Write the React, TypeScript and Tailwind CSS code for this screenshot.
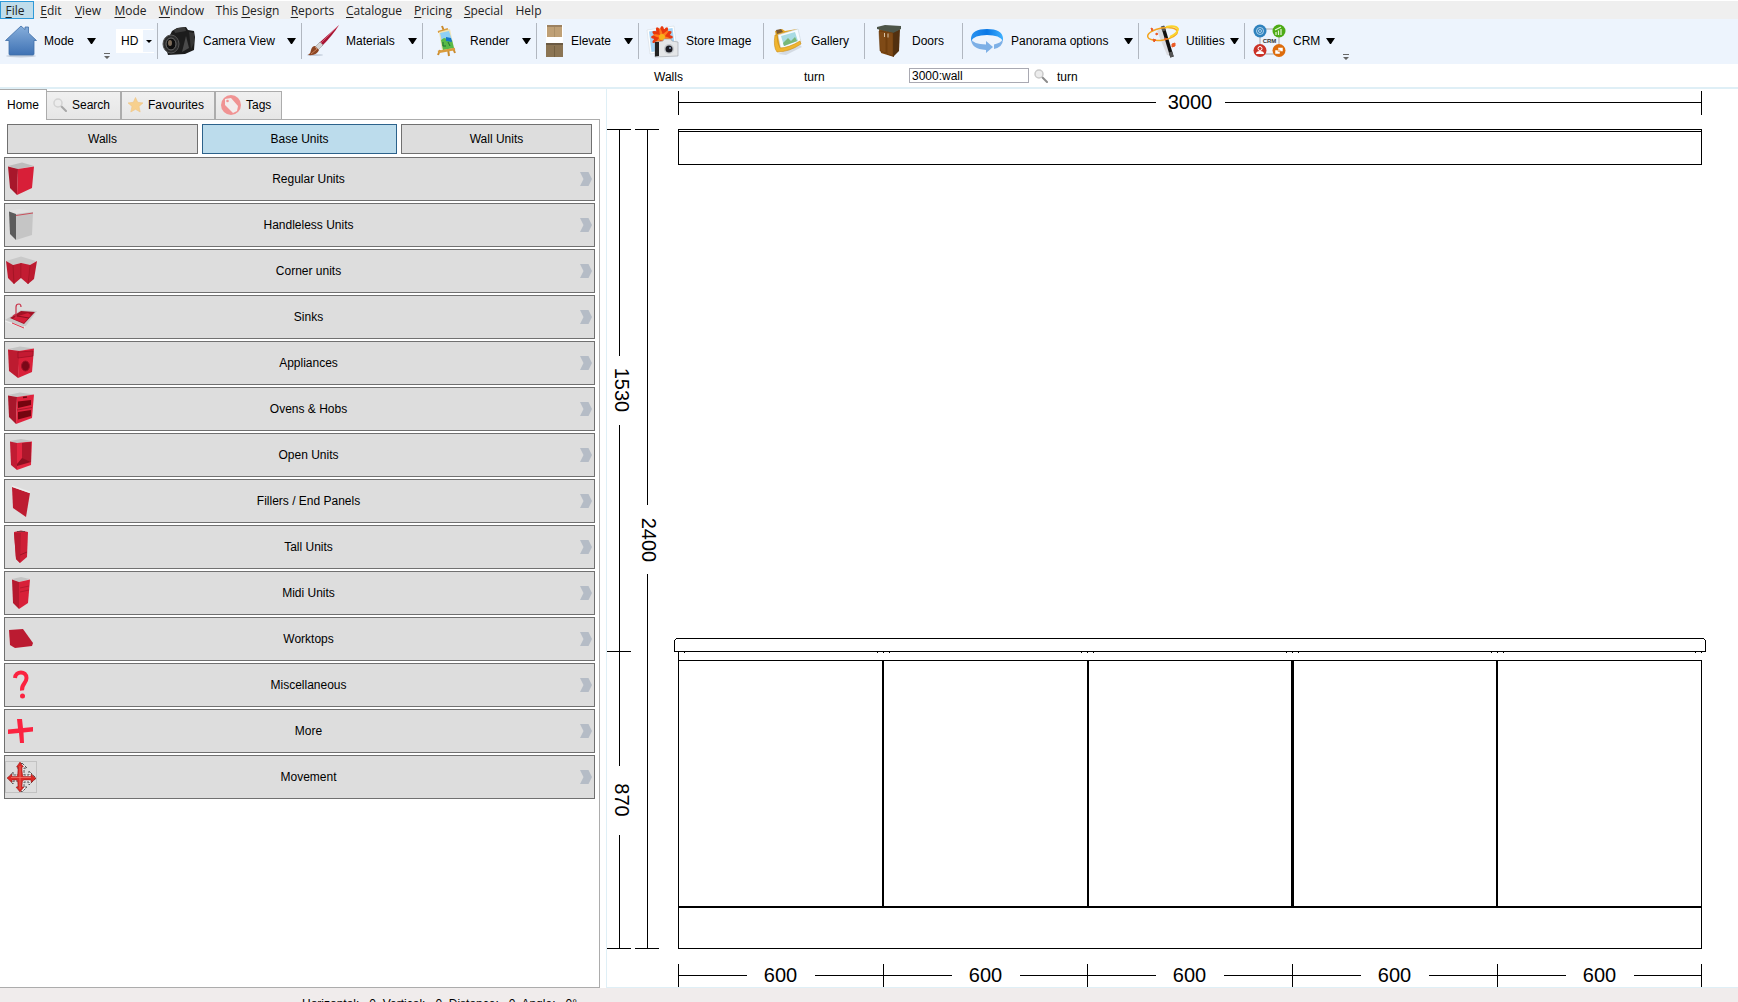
import React from 'react';

const menuItems = [
  { name: 'File', key: 0, width: 'w-[34px]' },
  { name: 'Edit', key: 0, width: 'w-[34px]' },
  { name: 'View', key: 0, width: 'w-[40px]' },
  { name: 'Mode', key: 0, width: 'w-[45px]' },
  { name: 'Window', key: 0, width: 'w-[57px]' },
  { name: 'This Design', key: 5, width: 'w-[75px]' },
  { name: 'Reports', key: 0, width: 'w-[55px]' },
  { name: 'Catalogue', key: 0, width: 'w-[68px]' },
  { name: 'Pricing', key: 0, width: 'w-[50px]' },
  { name: 'Special', key: 0, width: 'w-[51px]' },
  { name: 'Help', key: -1, width: 'w-[39px]' },
];

function MenuBar() {
  return (
    <nav className="mt-px flex h-[18px] shrink-0 bg-[#efefef] font-['Open_Sans',sans-serif] text-[12px] leading-[18px] text-[#222]">
      {menuItems.map((item, index) => (
        <button
          key={item.name}
          className={`${item.width} whitespace-nowrap border ${
            index === 0 ? 'border-[#2f9ad8] bg-[#c0ddeb] pr-1' : 'border-transparent'
          }`}
        >
          {item.key < 0 ? (
            item.name
          ) : (
            <>
              {item.name.slice(0, item.key)}
              <span className="underline underline-offset-2">{item.name[item.key]}</span>
              {item.name.slice(item.key + 1)}
            </>
          )}
        </button>
      ))}
    </nav>
  );
}

function DownArrow() {
  return (
    <svg width="9" height="6" viewBox="0 0 9 6">
      <path d="M0 0h9L5 6H4z" fill="#000" />
    </svg>
  );
}

function OverflowMark() {
  return (
    <svg width="6" height="7" viewBox="0 0 6 7" className="self-end">
      <path d="M0 0h6v1H0zM0 3h6L3 6z" fill="#666" />
    </svg>
  );
}

const houseIcon = (
  <>
    <defs>
      <linearGradient id="house" x1="0" y1="0" x2="0" y2="1">
        <stop offset="0" stopColor="#86aedb" />
        <stop offset="1" stopColor="#3f72b4" />
      </linearGradient>
    </defs>
    <ellipse cx="21" cy="33" rx="15" ry="1.500" fill="#c5cfdd" />
    <path
      d="M21 3L5.500 17.500H9V31q0 1 1 1H33q1 0 1-1V17.500H36.500L28.500 10V4H25V6.500z"
      fill="url(#house)"
      stroke="#3f6ea8"
      strokeWidth=".8"
    />
  </>
);

const cameraIcon = (
  <>
    <path d="M14 8l5-3 9-1 2 3 6 1 1 6-1 13-9 4-17 1-3-10z" fill="#1c1c1c" />
    <path d="M16 7l4-2 7-1 1 4-11 2z" fill="#3a3a3a" />
    <path d="M31 9l5 1v10l-3 6z" fill="#343434" />
    <path d="M28 13l3 12-7 4z" fill="#4a4a4a" />
    <ellipse cx="13" cy="21" rx="8" ry="9" fill="#2c2c2c" stroke="#555" />
    <ellipse cx="13" cy="21" rx="5" ry="6" fill="#0e0e0e" stroke="#6a6a6a" />
    <ellipse cx="12" cy="20" rx="2" ry="3" fill="#7b6a58" />
  </>
);

const brushIcon = (
  <>
    <ellipse cx="13" cy="32" rx="8" ry="1" fill="#c5cfdd" />
    <path d="M37 2L17 20l3 3q11-11 17-21z" fill="#a81533" />
    <path d="M36 3L19 20" stroke="#e0708a" strokeWidth=".7" />
    <path d="M18 19l3 3-5 5-3-3z" fill="#d5d5d5" stroke="#888" strokeWidth=".5" />
    <path d="M13 23l4 4q-2 6-11 5 3-2 3-5 1-4 4-4z" fill="#8c4523" />
    <path d="M13 24l2 2-6 5" fill="none" stroke="#c7825c" />
  </>
);

const easelIcon = (
  <>
    <path d="M19 3l2 5M17 27l-2 5M30 25l2 5M25 26l1 7" stroke="#c98a2e" strokeWidth="2" />
    <path d="M15 9l10-3" stroke="#d99b3c" strokeWidth="2" />
    <path d="M16 9l11-3 4 19-12 3z" fill="#f2e3b3" />
    <path d="M17 10l9-2 3 9-10 2z" fill="#8fd0f5" />
    <path d="M18 17l3-2 8 2 2 8-11 2z" fill="#58b947" />
    <path d="M23 14l5 1 1 4-6-1z" fill="#1677c8" />
    <path d="M20 19v4h3M25 19l2 4" stroke="#1f6f36" fill="none" />
    <path d="M15 29l17-3" stroke="#d99b3c" strokeWidth="2.500" />
  </>
);

const elevateIcon = (
  <>
    <path d="M9 2h17v32H9z" fill="#fff" />
    <path d="M10 2h15v12H10z" fill="#bfa076" />
    <path d="M10 2h15v2H10z" fill="#9c8160" />
    <path d="M17.500 4v10" stroke="#a08560" strokeWidth=".6" />
    <path d="M9 20h17v14H9z" fill="#8b7453" />
    <path d="M9 20h17v2H9z" fill="#6b5a43" />
    <path d="M17.500 23v11" stroke="#655236" strokeWidth=".6" />
  </>
);

const storeImageIcon = (
  <>
    <path d="M8 7l27-4 3 24-27 4z" fill="#fff" stroke="#d5dbe2" strokeWidth=".6" />
    <path d="M10 8.500L33.500 5l2.500 20-23.500 4z" fill="#a5d4f5" />
    {[0, 30, 60, 90, 120, 150].map((angle) => (
      <ellipse key={angle} cx="23" cy="14" rx="11" ry="3" fill="#e8380d" transform={`rotate(${angle} 23 14)`} />
    ))}
    {[15, 75, 135].map((angle) => (
      <ellipse key={angle} cx="23" cy="14" rx="9" ry="1.500" fill="#ff7a1c" transform={`rotate(${angle} 23 14)`} />
    ))}
    <circle cx="23" cy="14" r="3" fill="#f6b21b" />
    <path d="M16 19l8-1 1-2h7l1 2 6 1v14l-23 1z" fill="#e4e6e8" stroke="#9aa0a6" strokeWidth=".6" />
    <path d="M16 19h4v14l-4 .5z" fill="#222" />
    <circle cx="30" cy="26" r="5" fill="#c4c8cc" />
    <circle cx="30" cy="26" r="3.500" fill="#1b1b22" />
    <circle cx="31" cy="25" r="1" fill="#8ea0c0" />
  </>
);

const galleryIcon = (
  <>
    <path d="M14 31l22-9 2 2-16 8z" fill="#d3dae3" />
    <path d="M11 8l7-2 3 2 12-2 4 13-22 9z" fill="#e2a526" />
    <path d="M12 7l5-1 2 3-6 2z" fill="#7b5a33" />
    <path d="M14 12l20-6 3 13-20 8z" fill="#f7fbff" stroke="#c9d7e2" strokeWidth=".6" />
    <path d="M17 13l14-4 3 9-14 5z" fill="#a9dbe3" />
    <path d="M19 20l5-5 3 3 4-4 2 4-13 5z" fill="#7ab878" />
    <path d="M11 12q-2 12 2 17 12 0 24-8l-1-3q-12 7-20 7-3-5-3-13z" fill="#f0b52f" stroke="#c88c18" strokeWidth=".6" />
  </>
);

const doorsIcon = (
  <>
    <path d="M14 6l15 3v25l-13-4z" fill="#7d4712" />
    <path d="M28 9l7-3-1 22-6 6z" fill="#52300f" />
    <path d="M12 4l8-2 16 1v3l-8 4-16-4z" fill="#4d5549" />
    <path d="M14 8l7 1v21l-6-2zM22 9l6 1v23l-6-2z" fill="#7f4a16" stroke="#63370b" strokeWidth=".5" />
    <path d="M19.500 10v4M23 10.500v4" stroke="#e1d4bb" strokeWidth=".9" />
  </>
);

const panoramaIcon = (
  <>
    <defs>
      <linearGradient id="pano" x1="0" y1="0" x2="1" y2="0">
        <stop offset="0" stopColor="#2b93f0" />
        <stop offset=".5" stopColor="#0a78e6" />
        <stop offset="1" stopColor="#3fb1ff" />
      </linearGradient>
    </defs>
    <path d="M8 16q2 5 15 5.500V18l7 6-7 6v-3Q8 26 8 16z" fill="#7eb0e6" />
    <path d="M40 16q0 8-9 10v-4.500q7-1.500 9-5.500z" fill="#7eb0e6" />
    <path d="M8 15Q9 6 24 6t16 9v3q-3-6-16-6T8 18z" fill="url(#pano)" />
  </>
);

const utilitiesIcon = (
  <>
    <path d="M18 8l6-5 9 30-5-1z" fill="#d5d5d8" opacity=".8" />
    <path d="M24 4l9 30" stroke="#111" strokeWidth="3.500" />
    <path d="M23.500 3l1.500 5M31.500 29l1.500 5" stroke="#555" strokeWidth="3.500" />
    <ellipse cx="23.500" cy="11" rx="15" ry="6" fill="none" stroke="#f3a41f" strokeWidth="1.500" transform="rotate(-10 23.500 11)" />
    <path d="M27 4q10-2 12 2 0 4-8 8" fill="none" stroke="#fbd32c" strokeWidth="2" />
    <path d="M17 10l2 1-2 1zM12 5l2 1-1 2zM33 21l3-1v3l-3 1zM14 16l3 1-2 2zM26 15l2 1-2 1z" fill="#ec5b25" stroke="#ec5b25" />
  </>
);

const crmIcon = (
  <>
    <rect x="15" y="6" width="19" height="25" rx="4" fill="none" stroke="#a9a9a9" />
    <circle cx="15" cy="8" r="6.500" fill="#2f82bd" />
    <circle cx="15" cy="8" r="3.500" fill="none" stroke="#cfe6f5" strokeWidth=".8" />
    <circle cx="15" cy="8" r="1.500" fill="none" stroke="#cfe6f5" strokeWidth=".8" />
    <circle cx="34" cy="8" r="6.500" fill="#4dab16" />
    <path d="M31 12V9M33.500 12V7.500M36 12V6M30 7l6-3" stroke="#e4f6d8" strokeWidth="1.200" />
    <circle cx="15" cy="27.500" r="6.500" fill="#cb3227" />
    <circle cx="15" cy="25.500" r="2" fill="none" stroke="#fff" />
    <path d="M11 31q0-3 4-3t4 3z" fill="#fff" />
    <circle cx="34" cy="27.500" r="6.500" fill="#dd6c0c" />
    <path d="M33 24.500h5v4h-5zM30 27h5v4h-5z" fill="#fff" stroke="#dd6c0c" strokeWidth=".5" />
    <rect x="16" y="15" width="17" height="6" fill="#edf4fd" />
    <text x="24.500" y="20" textAnchor="middle" fontSize="6" fontWeight="bold" fill="#333">
      CRM
    </text>
  </>
);

const tools = [
  { name: 'Camera View', icon: cameraIcon, slot: 45, width: 'w-[144px]', menu: true },
  { name: 'Materials', icon: brushIcon, slot: 44, width: 'w-[121px]', menu: true },
  { name: 'Render', icon: easelIcon, slot: 47, width: 'w-[114px]', menu: true },
  { name: 'Elevate', icon: elevateIcon, slot: 34, width: 'w-[102px]', menu: true },
  { name: 'Store Image', icon: storeImageIcon, slot: 47, width: 'w-[125px]', menu: false },
  { name: 'Gallery', icon: galleryIcon, slot: 47, width: 'w-[101px]', menu: false },
  { name: 'Doors', icon: doorsIcon, slot: 47, width: 'w-[98px]', menu: false },
  { name: 'Panorama options', icon: panoramaIcon, slot: 48, width: 'w-[176px]', menu: true },
  { name: 'Utilities', icon: utilitiesIcon, slot: 47, width: 'w-[106px]', menu: true },
];

function ToolIcon({ slot, children }: { slot: number; children: React.ReactNode }) {
  return (
    <svg width={slot} height="36" viewBox={`0 0 ${slot} 36`} className="shrink-0">
      {children}
    </svg>
  );
}

function Toolbar() {
  return (
    <div className="flex h-[45px] shrink-0 bg-[#edf4fd] pt-1 pb-[5px]">
      <div className="flex w-[158px] shrink-0 items-center border-r border-[#b1b7c0]">
        <button className="flex w-[96px] items-center">
          <ToolIcon slot={44}>{houseIcon}</ToolIcon>
          <span className="flex-1 text-left">Mode</span>
          <DownArrow />
        </button>
        <div className="ml-2 flex h-[38px] items-end">
          <OverflowMark />
        </div>
        <div className="relative ml-1.5 flex h-6 w-[38px] bg-white">
          <select aria-label="Quality" className="h-6 w-full appearance-none bg-white pl-[5px] outline-none">
            <option>HD</option>
          </select>
          <span className="pointer-events-none absolute top-px right-0 flex h-[22px] w-[11px] items-center justify-center bg-[#edf4fd]">
            <svg width="6" height="3" viewBox="0 0 6 3">
              <path d="M0 0h6L3 3z" fill="#000" />
            </svg>
          </span>
        </div>
      </div>
      {tools.map((tool) => (
        <button
          key={tool.name}
          className={`${tool.width} flex shrink-0 items-center whitespace-nowrap border-r border-[#b1b7c0] pr-[5px]`}
        >
          <ToolIcon slot={tool.slot}>{tool.icon}</ToolIcon>
          <span className="flex-1 text-left">{tool.name}</span>
          {tool.menu && <DownArrow />}
        </button>
      ))}
      <button className="flex w-[90px] shrink-0 items-center">
        <ToolIcon slot={48}>{crmIcon}</ToolIcon>
        <span className="flex-1 text-left">CRM</span>
        <DownArrow />
      </button>
      <div className="ml-2 flex h-[38px] items-end">
        <OverflowMark />
      </div>
    </div>
  );
}

function Magnifier() {
  return (
    <svg width="14" height="14" viewBox="0 0 14 14" className="shrink-0">
      <path d="M7.500 7.500L13 13" stroke="#8b8b8b" strokeWidth="2" strokeLinecap="round" />
      <circle cx="5" cy="5" r="4" fill="#ececec" stroke="#c9c9c9" strokeWidth="1.500" />
    </svg>
  );
}

function SearchRow() {
  return (
    <div className="flex h-[25px] shrink-0 items-center border-b-2 border-[#dfeff6] bg-white pl-[654px]">
      <label htmlFor="wall-name" className="w-[150px] pt-0.5">
        Walls
      </label>
      <span className="w-[105px] pt-0.5">turn</span>
      <input
        id="wall-name"
        defaultValue="3000:wall"
        className="h-[15px] w-[120px] border border-[#a9a9b2] bg-white px-0.5 leading-3 outline-none"
      />
      <button aria-label="Search" className="ml-[5px]">
        <Magnifier />
      </button>
      <span className="ml-[9px] pt-0.5">turn</span>
    </div>
  );
}

const units = [
  {
    name: 'Regular Units',
    icon: (
      <>
        <path d="M3 3l14-3.500L29 3 13 6z" fill="#bdbdbd" />
        <path d="M3 3.500L13 6l-1 26-7-7z" fill="#a8172b" />
        <path d="M13 6l16-2.500L27 25l-15 7z" fill="#d81f38" />
      </>
    ),
  },
  {
    name: 'Handleless Units',
    icon: (
      <>
        <path d="M3 2l11-2 14 2-17 3z" fill="#e2e2e2" />
        <path d="M4 2.500L11 5v26l-6-6z" fill="#5c5c5c" />
        <path d="M11 5l17-2-1 23-16 5z" fill="#c5c5c5" />
        <path d="M11 6.500l17-2.500" stroke="#c9505c" />
      </>
    ),
  },
  {
    name: 'Corner units',
    icon: (
      <>
        <path d="M1 6l15-4.500L31 6l-6 4-9-2-9 2z" fill="#c9c9c9" />
        <path d="M1 6l7 4 8-2 9 2 7-4-3 18-6 5-7-6-7 6-6-6z" fill="#bd1b30" />
        <path d="M8 10l1 19M16 8v15M25 10l-2 19" stroke="#93101f" strokeWidth=".6" />
        <path d="M16 8l9 2-2 19-7-6z" fill="#d02038" opacity=".3" />
      </>
    ),
  },
  {
    name: 'Sinks',
    icon: (
      <>
        <path d="M0 19L16 9l16 1-12 16z" fill="#c8c8c8" />
        <path d="M5 17l11-7 14 1-11 12z" fill="#a31225" />
        <path d="M10 16l13-4 3 2-7 8-11-4z" fill="#d41f38" />
        <path d="M12 15l12 2" stroke="#8c0f1f" />
        <path d="M0 20l19 7 1-2" fill="none" stroke="#eee" />
        <path d="M7 22l12 5" stroke="#e2334a" />
        <path d="M11 17V6q0-3 3-3 2 0 2 3M8 15l3-2" fill="none" stroke="#c8334a" strokeWidth="1.200" />
      </>
    ),
  },
  {
    name: 'Appliances',
    icon: (
      <>
        <path d="M3 2l12-2.500L29 1.500 15 4z" fill="#c4c4c4" />
        <path d="M3 2.500L15 4l-2 27-9-7z" fill="#bd1b30" />
        <path d="M14 4l15-2.500L27 25l-14 6z" fill="#d92039" />
        <path d="M13 5l15-1v5l-15 2z" fill="#c41a32" stroke="#8e0f20" strokeWidth=".6" />
        <ellipse cx="20.500" cy="19" rx="4" ry="5" fill="#7a0717" stroke="#a01226" />
      </>
    ),
  },
  {
    name: 'Ovens & Hobs',
    icon: (
      <>
        <path d="M3 2l12-2.500L29 1.500 12 4z" fill="#c4c4c4" />
        <path d="M3 2.500L12 4l-1 27-7-7z" fill="#a8172b" />
        <path d="M12 4l17-2.500L27 25l-16 6z" fill="#e0233d" />
        <path d="M13 8.500L26 7v5l-13 3zM13 19l13-2v6l-13 3.500z" fill="#74050f" />
        <path d="M18 4.500l4-.5" stroke="#6d0a14" strokeWidth="1.500" />
        <path d="M12 17l15-2.500" stroke="#a8172b" />
      </>
    ),
  },
  {
    name: 'Open Units',
    icon: (
      <>
        <path d="M5 2l11-2 11 2-15 3z" fill="#c4c4c4" />
        <path d="M5 2.500L12 4v27l-6-5z" fill="#c11c33" />
        <path d="M12 4l15-1.500L26 26l-14 5z" fill="#e32640" />
        <path d="M17 4l9-1v20l-9-3z" fill="#ad172b" />
        <path d="M12 25l5-6 9 4-14 4z" fill="#8c1020" />
      </>
    ),
  },
  {
    name: 'Fillers / End Panels',
    icon: (
      <>
        <path d="M7 2l18 6-4 24-13-9z" fill="#bd1c31" />
        <path d="M7 1l18 6.500" stroke="#ececec" strokeWidth="1.500" />
      </>
    ),
  },
  {
    name: 'Tall Units',
    icon: (
      <>
        <path d="M9 1l7-1.500L23 1l-1 25-7 6-4-4z" fill="#ce1f37" />
        <path d="M9 2h7l-1 30-4-4z" fill="#b81b30" />
        <path d="M12 .5h8" stroke="#7b3a42" />
        <path d="M15 24l7-3" stroke="#95101f" strokeWidth=".8" />
      </>
    ),
  },
  {
    name: 'Midi Units',
    icon: (
      <>
        <path d="M7 2l9-2 9 2-11 3z" fill="#c4c4c4" />
        <path d="M7 2.500L14 5v27l-6-6z" fill="#b5192e" />
        <path d="M14 5l11-2.500L23 26l-9 6z" fill="#d82039" />
        <path d="M15 11l9-2M15 15l9-2" stroke="#9c1426" strokeWidth=".6" />
      </>
    ),
  },
  {
    name: 'Worktops',
    icon: <path d="M4 7l14-1 10 14-1 3-17 2-5-3z" fill="#bb1b31" />,
  },
  {
    name: 'Miscellaneous',
    icon: (
      <>
        <path d="M10 9C10.500 1.500 21.500 1.500 21.500 9c0 6-5 5-4.500 12.500" fill="none" stroke="#fb2340" strokeWidth="4" />
        <circle cx="17.500" cy="27" r="2.500" fill="#fb2340" />
      </>
    ),
  },
  {
    name: 'More',
    icon: <path d="M12 4h5l1 9 10-1v4.500l-9.500 1L19 28h-4l-1-10-11 1v-4.500l10-1z" fill="#fb2340" />,
  },
  {
    name: 'Movement',
    icon: (
      <>
        <rect x=".5" y=".5" width="31" height="31" fill="none" stroke="#c2c2c2" />
        <path
          d="M17 2l5 5h-3v7h5v-4l7 7-7 7v-3h-5v5h3l-5 5-5-5h2v-6H8v3l-5-6 5-6v3h6V7h-2z"
          fill="#f3f3f3"
          stroke="#555"
          strokeDasharray="3 1"
        />
        <path
          d="M15 1l3.500 5H17q0 8 1.500 9.500H26V13l5 4.500-5 4V19h-7.500q-1.500 1-1.500 7h2l-4 5-4-5h2q0-6-1-7H7v2.500L2 17l5-4v2.500h5q1-1 1-9.500h-1.500z"
          fill="#dc2a26"
          stroke="#8d1515"
          strokeWidth=".5"
        />
        <path d="M15 5v23M6 16.500h20" stroke="#f07568" strokeWidth=".8" />
      </>
    ),
  },
];

function CataloguePanel() {
  return (
    <aside className="flex w-[606px] shrink-0 flex-col pr-1.5">
      <div role="tablist" className="flex h-[31px] shrink-0 items-end">
        <button role="tab" aria-selected="true" className="h-full w-[47px] border-t border-r border-[#acacac] bg-white">
          Home
        </button>
        <button
          role="tab"
          className="flex h-[29px] w-[74px] items-center border-t border-r border-b border-[#acacac] bg-linear-to-b from-[#f0f0f0] to-[#e6e6e6] pb-0.5 pl-1.5"
        >
          <span className="w-[19px] opacity-70">
            <Magnifier />
          </span>
          Search
        </button>
        <button
          role="tab"
          className="flex h-[29px] w-[94px] items-center border border-[#acacac] bg-linear-to-b from-[#f0f0f0] to-[#e6e6e6] pb-0.5 pl-1.5"
        >
          <svg width="20" height="16" viewBox="0 0 20 16">
            <path
              d="M7.500.5l2.200 4.800 5.300.6-4 3.500 1.200 5.600-4.700-2.700L2.800 15 4 9.400 0 5.900l5.300-.6z"
              fill="#f7d08e"
              stroke="#efc587"
              strokeWidth=".6"
            />
          </svg>
          Favourites
        </button>
        <button
          role="tab"
          className="flex h-[29px] w-[67px] items-center border border-[#acacac] bg-linear-to-b from-[#f0f0f0] to-[#e6e6e6] pb-0.5 pl-[5px]"
        >
          <svg width="25" height="20" viewBox="0 0 25 20">
            <circle cx="10" cy="10" r="10" fill="#f09393" />
            <path d="M4 4l6-1 7 8-1 5-4 2-8-8z" fill="#f2eded" />
            <circle cx="6.500" cy="6" r="1.300" fill="#f09393" />
          </svg>
          Tags
        </button>
        <div className="h-px flex-1 bg-[#acacac]" />
      </div>
      <div className="flex-1 border-r border-b border-[#acacac] px-1 pt-1">
        <div className="mb-[3px] grid grid-cols-[191fr_195fr_191fr] gap-1 px-[3px]">
          <button className="h-[30px] border border-[#707070] bg-[#ddd]">Walls</button>
          <button className="h-[30px] border border-[#2c628b] bg-[#bcdcec]">Base Units</button>
          <button className="h-[30px] border border-[#707070] bg-[#ddd]">Wall Units</button>
        </div>
        <div className="flex flex-col gap-0.5">
          {units.map((unit) => (
            <button key={unit.name} className="flex h-11 items-center border border-[#707070] bg-[#ddd]">
              <svg width="32" height="32" viewBox="0 0 32 32" className="shrink-0 overflow-visible">
                {unit.icon}
              </svg>
              <span className="flex-1">{unit.name}</span>
              <svg width="14" height="14" viewBox="0 0 14 14" className="shrink-0">
                <path d="M0 0h8.500L12 7l-3.500 7H0l3.500-7z" fill="#b5bcc6" />
              </svg>
            </button>
          ))}
        </div>
      </div>
    </aside>
  );
}

// plan coordinates, 1 unit = 1 px
const left = 71.5;
const right = 1094.5;
const ticks = [71.5, 276.5, 480.5, 685.5, 890.5, 1094.5];
const dividers = [
  { x: 275, width: 2 },
  { x: 480, width: 2 },
  { x: 684, width: 3 },
  { x: 889, width: 2 },
];
const fixings = [77, 270, 276, 282, 474, 480, 486, 679, 685, 691, 884, 890, 896, 1088, 1094];

function Elevation() {
  return (
    <svg viewBox="0 0 1131 898" className="block w-full" shapeRendering="crispEdges">
      <g fill="none" stroke="#000">
        {/* overall width */}
        <path d={`M${left} 2v24M${right} 2v24M${left} 13.500H549M618 13.500H${right}`} />
        {/* ceiling strip */}
        <path d={`M${left} 40v35.500H${right}V40M71 40.500H1095M71 42.500H1095`} />
        {/* heights */}
        <path d="M0 40.500h24M28 40.500h24M12.500 40v227M12.500 336v341M0 562.500h24M12.500 746v114M0 859.500h24M28 859.500h24" />
        <path d="M40.500 40v376M40.500 485v375" />
        {/* worktop */}
        <path d="M67.500 563V551.500L69.500 549.500H1096.500L1098.500 551.500V562.500H67" />
        {/* carcass */}
        <path d={`M${left} 563V859.500H${right}V571.500H71`} />
        {/* unit widths */}
        {ticks.map((x) => (
          <path key={x} d={`M${x} 875v23`} />
        ))}
        {ticks.slice(0, -1).map((x, index) => (
          <path key={x} d={`M${x} 886.500h68M${x + 136} 886.500H${ticks[index + 1]}`} />
        ))}
      </g>
      <rect x="71" y="817" width="1024" height="2" />
      {dividers.map((d) => (
        <rect key={d.x} x={d.x} y="571" width={d.width} height="247" />
      ))}
      {fixings.map((x) => (
        <rect key={x} x={x} y="563" width="1" height="1" />
      ))}
      <g fontSize="20" textAnchor="middle" fill="#000">
        <text x="583" y="20">
          3000
        </text>
        {ticks.slice(0, -1).map((x) => (
          <text key={x} x={x + 102} y="893">
            600
          </text>
        ))}
        <text transform="translate(8 301) rotate(90)">1530</text>
        <text transform="translate(8 711) rotate(90)">870</text>
        <text transform="translate(35 451) rotate(90)">2400</text>
      </g>
    </svg>
  );
}

export default function App() {
  return (
    <div className="flex h-screen flex-col overflow-hidden bg-white font-['Liberation_Sans',Arial,sans-serif] text-[12px] leading-4 text-black">
      <MenuBar />
      <Toolbar />
      <SearchRow />
      <main className="flex min-h-0 flex-1">
        <CataloguePanel />
        <section className="min-w-0 flex-1 overflow-hidden border-b border-l border-[#dfeff6]">
          <Elevation />
        </section>
      </main>
      <footer className="h-3.5 shrink-0 overflow-hidden bg-[#f0ecec] pt-2 pl-[302px] whitespace-pre">
        {'Horizontal:   0, Vertical:   0, Distance:   0, Angle:   0°'}
      </footer>
    </div>
  );
}
